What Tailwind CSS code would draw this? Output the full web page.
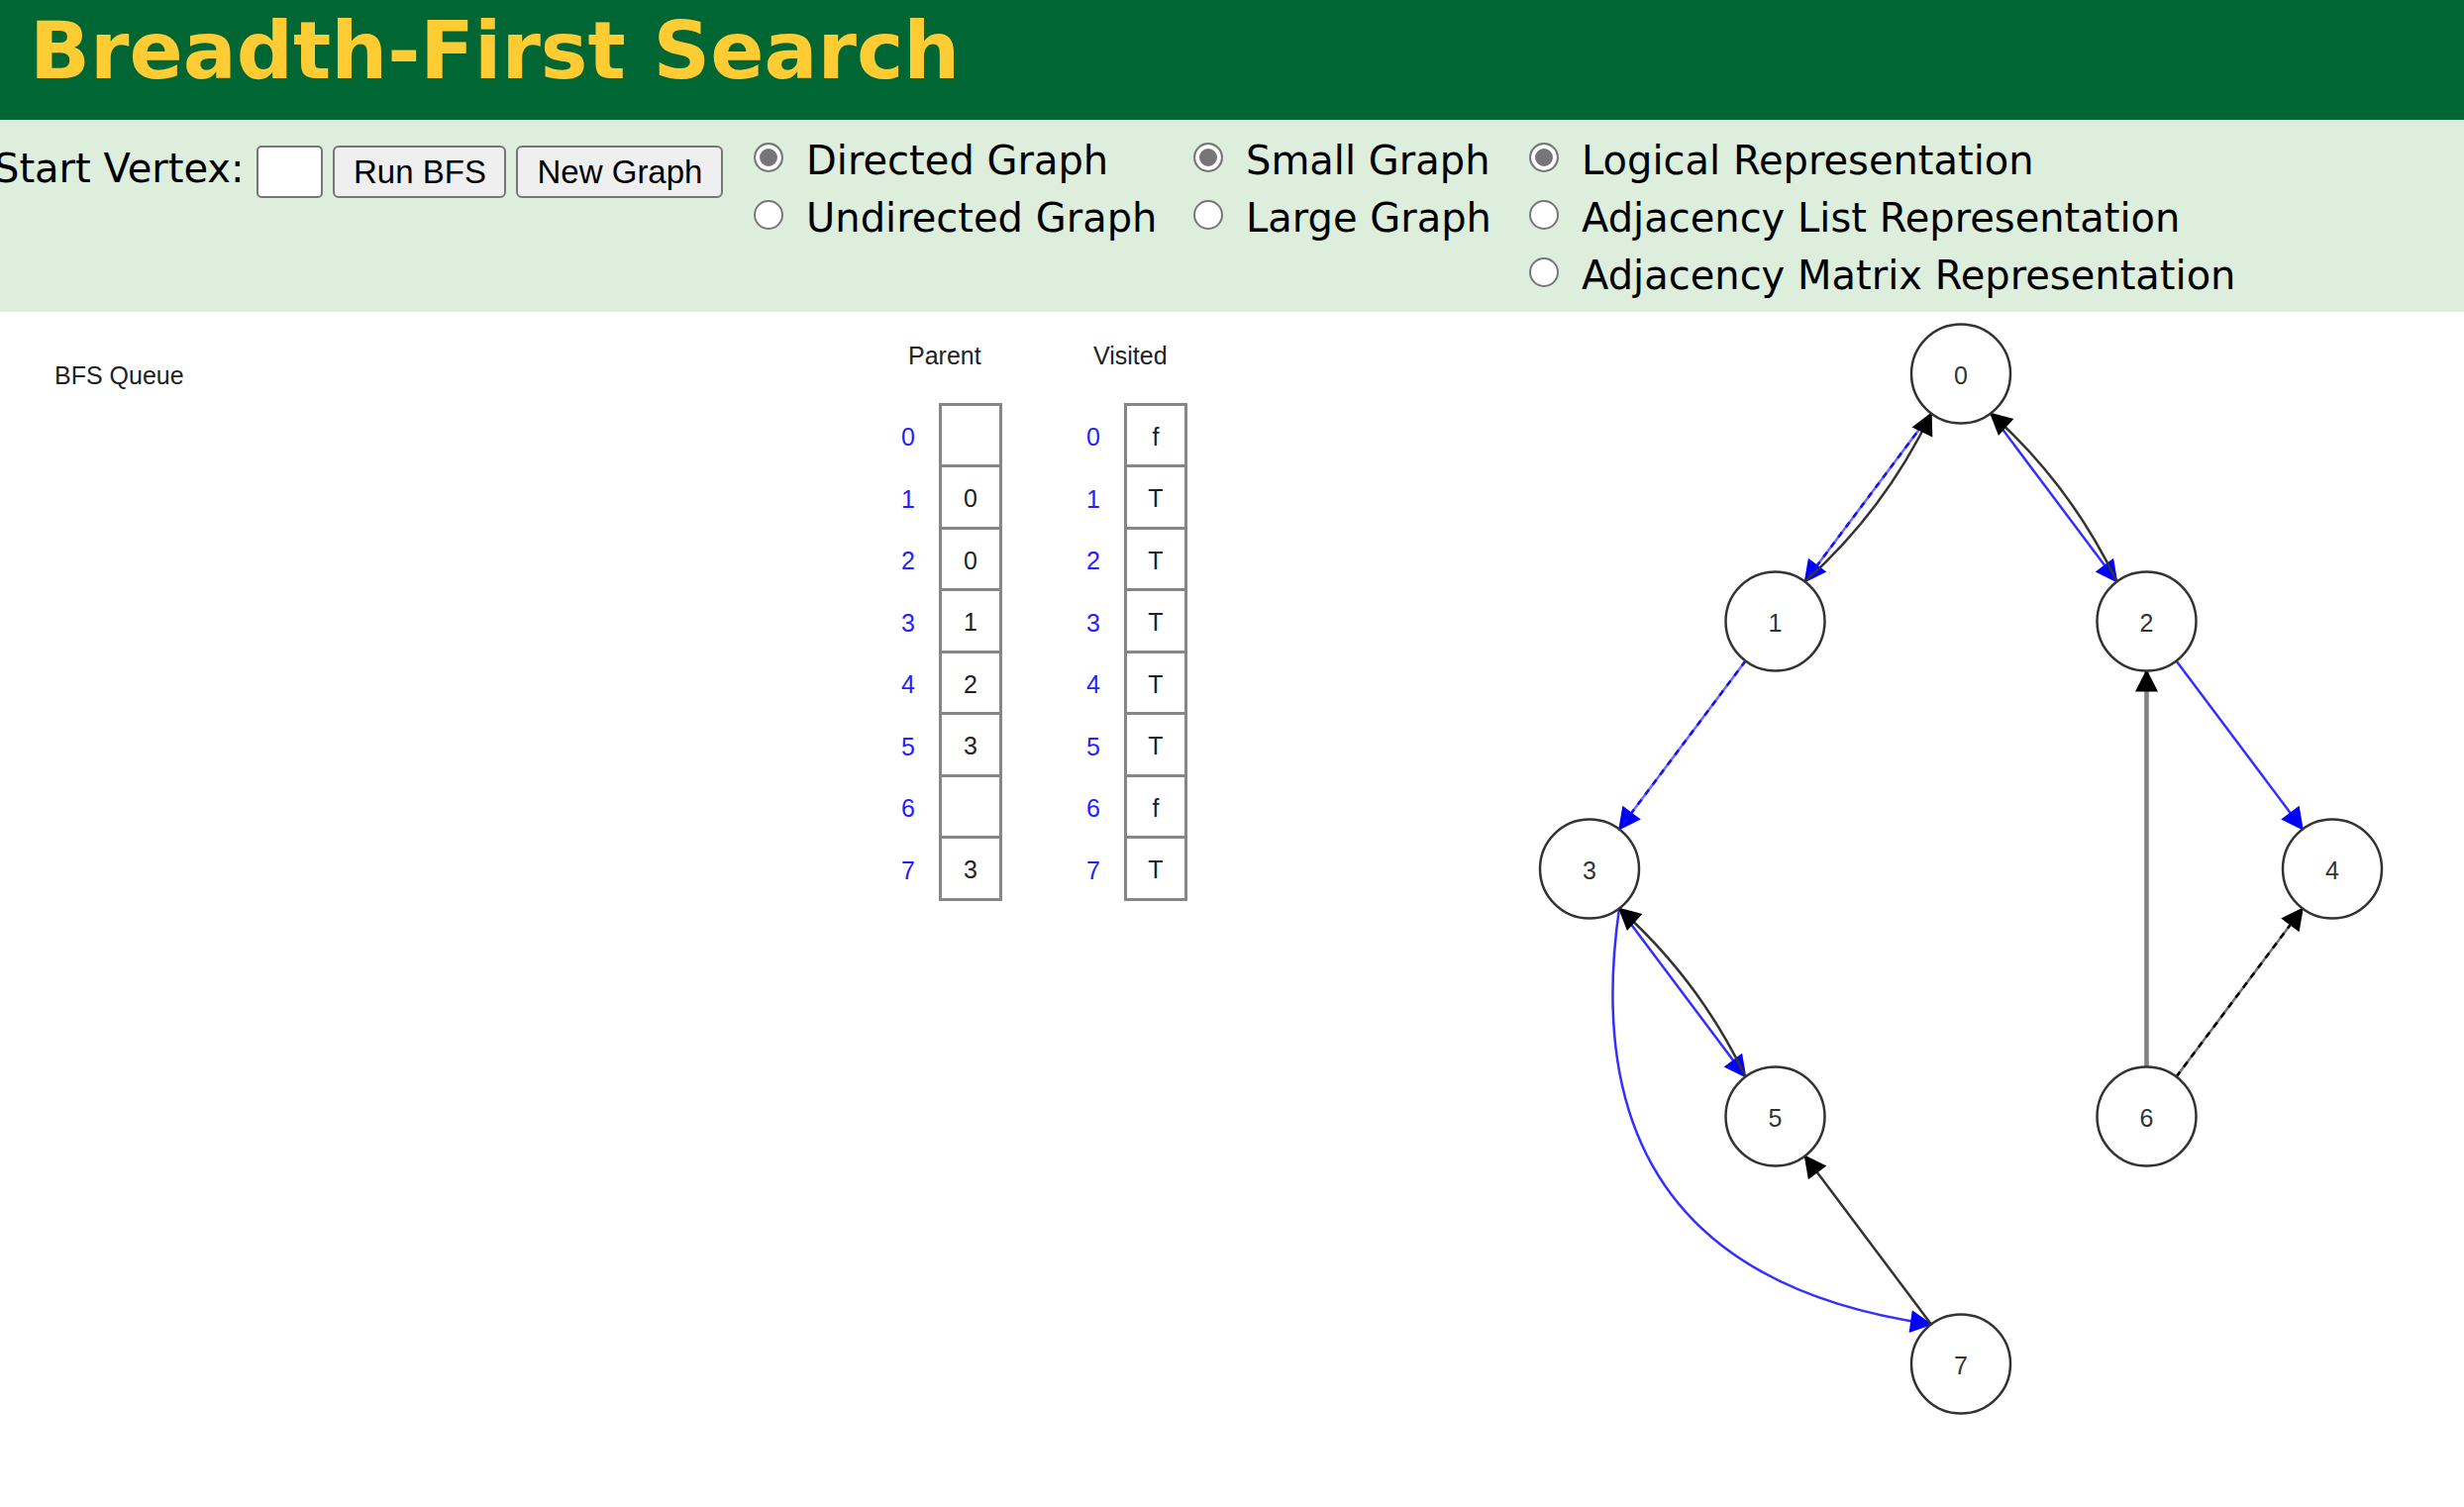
<!DOCTYPE html>
<html lang="en">
<head>
<meta charset="utf-8">
<title>Breadth-First Search</title>
<script src="https://cdn.jsdelivr.net/npm/@tailwindcss/browser@4"></script>
</head>
<body class="min-h-screen overflow-x-hidden bg-white text-black font-['Liberation_Sans',Arial,sans-serif]">

<header class="h-[121px] bg-[#006633] pt-[2px] pl-[30px] font-['DejaVu_Sans',Verdana,sans-serif]">
  <h1 class="text-[80px] leading-[100px] font-bold whitespace-nowrap text-[#ffcc33]">Breadth-First Search</h1>
</header>

<form class="flex h-[194px] items-start overflow-hidden bg-[#ddeedd] pt-3 text-[40px] leading-[58px] whitespace-nowrap font-['DejaVu_Sans',Verdana,sans-serif]" onsubmit="return false">
  <div class="flex w-[761px] shrink-0 items-start pt-2">
    <label for="start" class="-ml-[6px]">Start Vertex:</label>
    <input id="start" type="text" maxlength="2" class="mt-[6px] ml-[13px] h-[53px] w-[67px] rounded-[5px] border-2 border-[#767676] bg-white px-2 text-[33px]">
    <button type="button" class="mt-[6px] ml-[10px] h-[53px] w-[175px] rounded-[6px] border-2 border-[#767676] bg-[#efefef] text-[33px] leading-none font-['Liberation_Sans',Arial,sans-serif]">Run BFS</button>
    <button type="button" class="mt-[6px] ml-[10px] h-[53px] w-[209px] rounded-[6px] border-2 border-[#767676] bg-[#efefef] text-[33px] leading-none font-['Liberation_Sans',Arial,sans-serif]">New Graph</button>
  </div>

  <fieldset class="w-[444px] shrink-0">
    <label class="flex gap-[23px]"><input type="radio" name="direction" checked class="mt-[11px] size-[30px] shrink-0 appearance-none rounded-full border-2 border-[#767676] bg-white checked:bg-[#767676] checked:shadow-[inset_0_0_0_4px_white]">Directed Graph</label>
    <label class="flex gap-[23px]"><input type="radio" name="direction" class="mt-[11px] size-[30px] shrink-0 appearance-none rounded-full border-2 border-[#767676] bg-white checked:bg-[#767676] checked:shadow-[inset_0_0_0_4px_white]">Undirected Graph</label>
  </fieldset>

  <fieldset class="w-[339px] shrink-0">
    <label class="flex gap-[23px]"><input type="radio" name="size" checked class="mt-[11px] size-[30px] shrink-0 appearance-none rounded-full border-2 border-[#767676] bg-white checked:bg-[#767676] checked:shadow-[inset_0_0_0_4px_white]">Small Graph</label>
    <label class="flex gap-[23px]"><input type="radio" name="size" class="mt-[11px] size-[30px] shrink-0 appearance-none rounded-full border-2 border-[#767676] bg-white checked:bg-[#767676] checked:shadow-[inset_0_0_0_4px_white]">Large Graph</label>
  </fieldset>

  <fieldset class="shrink-0">
    <label class="flex gap-[23px]"><input type="radio" name="view" checked class="mt-[11px] size-[30px] shrink-0 appearance-none rounded-full border-2 border-[#767676] bg-white checked:bg-[#767676] checked:shadow-[inset_0_0_0_4px_white]">Logical Representation</label>
    <label class="flex gap-[23px]"><input type="radio" name="view" class="mt-[11px] size-[30px] shrink-0 appearance-none rounded-full border-2 border-[#767676] bg-white checked:bg-[#767676] checked:shadow-[inset_0_0_0_4px_white]">Adjacency List Representation</label>
    <label class="flex gap-[23px]"><input type="radio" name="view" class="mt-[11px] size-[30px] shrink-0 appearance-none rounded-full border-2 border-[#767676] bg-white checked:bg-[#767676] checked:shadow-[inset_0_0_0_4px_white]">Adjacency Matrix Representation</label>
  </fieldset>
</form>

<main class="flex items-start text-[25px] leading-[30px] text-[#222222]">
  <h2 class="w-[886px] shrink-0 pt-[49px] pl-[55px]">BFS Queue</h2>

  <div class="flex shrink-0 gap-[61px] pt-[29px]">
    <table class="w-[126px] table-fixed border-separate border-spacing-0 text-center">
      <caption class="pb-[33px] pl-[31px] text-left">Parent</caption>
      <tbody>
        <tr class="h-[65px]"><th scope="row" class="w-[62px] pt-[2px] font-normal text-[#2222ff]">0</th><td class="border-3 border-[#868686] pt-[2px]"></td></tr>
        <tr class="h-[63px]"><th scope="row" class="font-normal text-[#2222ff]">1</th><td class="border-3 border-t-0 border-[#868686] pt-[2px]">0</td></tr>
        <tr class="h-[62px]"><th scope="row" class="font-normal text-[#2222ff]">2</th><td class="border-3 border-t-0 border-[#868686] pt-[2px]">0</td></tr>
        <tr class="h-[63px]"><th scope="row" class="font-normal text-[#2222ff]">3</th><td class="border-3 border-t-0 border-[#868686] pt-[2px]">1</td></tr>
        <tr class="h-[62px]"><th scope="row" class="font-normal text-[#2222ff]">4</th><td class="border-3 border-t-0 border-[#868686] pt-[2px]">2</td></tr>
        <tr class="h-[63px]"><th scope="row" class="font-normal text-[#2222ff]">5</th><td class="border-3 border-t-0 border-[#868686] pt-[2px]">3</td></tr>
        <tr class="h-[62px]"><th scope="row" class="font-normal text-[#2222ff]">6</th><td class="border-3 border-t-0 border-[#868686] pt-[2px]"></td></tr>
        <tr class="h-[63px]"><th scope="row" class="font-normal text-[#2222ff]">7</th><td class="border-3 border-t-0 border-[#868686] pt-[2px]">3</td></tr>
      </tbody>
    </table>
    <table class="w-[126px] table-fixed border-separate border-spacing-0 text-center">
      <caption class="pb-[33px] pl-[31px] text-left">Visited</caption>
      <tbody>
        <tr class="h-[65px]"><th scope="row" class="w-[62px] pt-[2px] font-normal text-[#2222ff]">0</th><td class="border-3 border-[#868686] pt-[2px]">f</td></tr>
        <tr class="h-[63px]"><th scope="row" class="font-normal text-[#2222ff]">1</th><td class="border-3 border-t-0 border-[#868686] pt-[2px]">T</td></tr>
        <tr class="h-[62px]"><th scope="row" class="font-normal text-[#2222ff]">2</th><td class="border-3 border-t-0 border-[#868686] pt-[2px]">T</td></tr>
        <tr class="h-[63px]"><th scope="row" class="font-normal text-[#2222ff]">3</th><td class="border-3 border-t-0 border-[#868686] pt-[2px]">T</td></tr>
        <tr class="h-[62px]"><th scope="row" class="font-normal text-[#2222ff]">4</th><td class="border-3 border-t-0 border-[#868686] pt-[2px]">T</td></tr>
        <tr class="h-[63px]"><th scope="row" class="font-normal text-[#2222ff]">5</th><td class="border-3 border-t-0 border-[#868686] pt-[2px]">T</td></tr>
        <tr class="h-[62px]"><th scope="row" class="font-normal text-[#2222ff]">6</th><td class="border-3 border-t-0 border-[#868686] pt-[2px]">f</td></tr>
        <tr class="h-[63px]"><th scope="row" class="font-normal text-[#2222ff]">7</th><td class="border-3 border-t-0 border-[#868686] pt-[2px]">T</td></tr>
      </tbody>
    </table>
  </div>

  <!-- Graph: one drawing unit is 2.5 pixels -->
  <svg class="ml-auto h-[1200px] w-[940px] shrink-0" viewBox="619.2 0 376 480" role="img" aria-label="Directed graph with eight vertices">
    <defs>
      <marker id="black" markerUnits="userSpaceOnUse" markerWidth="12" markerHeight="12" refX="9" refY="6" orient="auto" viewBox="0 0 12 12"><path d="M9.6 6L0.6 1.4V10.6Z" fill="#000"/></marker>
      <marker id="blue" markerUnits="userSpaceOnUse" markerWidth="12" markerHeight="12" refX="9" refY="6" orient="auto" viewBox="0 0 12 12"><path d="M9.6 6L0.6 1.4V10.6Z" fill="#00f"/></marker>
    </defs>
    <g fill="none" stroke="#3030ff" stroke-width="1">
      <path d="M780 41L729 109" stroke="#6a6aff" marker-end="url(#blue)"/>
      <path d="M780 41L729 109" stroke="#1010ff" stroke-dasharray="2.5 2.5"/>
      <path d="M804 41L855 109" marker-end="url(#blue)"/>
      <path d="M705 141L654 209" stroke="#6a6aff" marker-end="url(#blue)"/>
      <path d="M705 141L654 209" stroke="#1010ff" stroke-dasharray="2.5 2.5"/>
      <path d="M879 141L930 209" marker-end="url(#blue)"/>
      <path d="M654 241L705 309" marker-end="url(#blue)"/>
      <path d="M654 241Q633 388 780 409" marker-end="url(#blue)"/>
    </g>
    <g fill="none" stroke="#333" stroke-width="1">
      <path d="M729 109Q761.3 80.1 780 41" marker-end="url(#black)"/>
      <path d="M855 109Q836.3 69.9 804 41" marker-end="url(#black)"/>
      <path d="M705 309Q686.3 269.9 654 241" marker-end="url(#black)"/>
      <path d="M867 305V145" stroke="#808080" stroke-width="1.8" marker-end="url(#black)"/>
      <path d="M879 309L930 241" stroke="#707070" marker-end="url(#black)"/>
      <path d="M879 309L930 241" stroke="#000" stroke-dasharray="2.5 2.5"/>
      <path d="M780 409L729 341" marker-end="url(#black)"/>
    </g>
    <g fill="#fff" stroke="#333" stroke-width="1">
      <circle cx="792" cy="25" r="20"/>
      <circle cx="717" cy="125" r="20"/>
      <circle cx="867" cy="125" r="20"/>
      <circle cx="642" cy="225" r="20"/>
      <circle cx="942" cy="225" r="20"/>
      <circle cx="717" cy="325" r="20"/>
      <circle cx="867" cy="325" r="20"/>
      <circle cx="792" cy="425" r="20"/>
    </g>
    <g class="text-[10px]" fill="#333" text-anchor="middle">
      <text x="792" y="29">0</text>
      <text x="717" y="129">1</text>
      <text x="867" y="129">2</text>
      <text x="642" y="229">3</text>
      <text x="942" y="229">4</text>
      <text x="717" y="329">5</text>
      <text x="867" y="329">6</text>
      <text x="792" y="429">7</text>
    </g>
  </svg>
</main>
</body>
</html>
